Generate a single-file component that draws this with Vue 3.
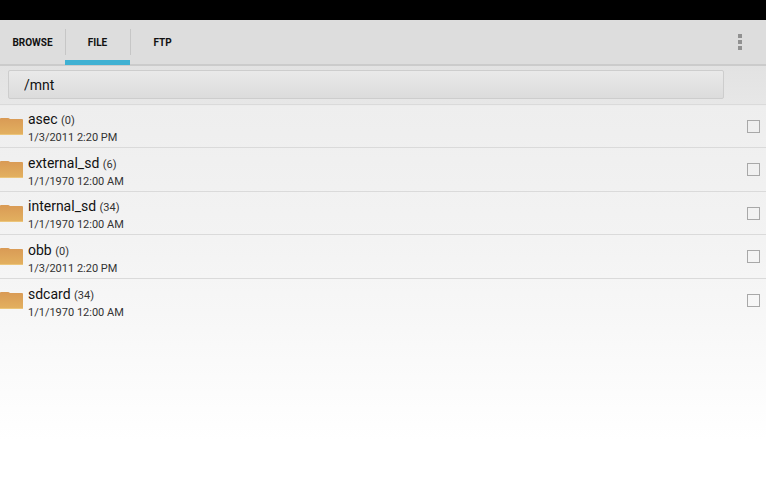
<script setup>
import { ref } from "vue";

const tabs = ["Browse", "File", "FTP"];
const activeTab = ref("File");
const path = ref("/mnt");

const folders = ref([
  { name: "asec", count: 0, date: "1/3/2011 2:20 PM", checked: false },
  { name: "external_sd", count: 6, date: "1/1/1970 12:00 AM", checked: false },
  { name: "internal_sd", count: 34, date: "1/1/1970 12:00 AM", checked: false },
  { name: "obb", count: 0, date: "1/3/2011 2:20 PM", checked: false },
  { name: "sdcard", count: 34, date: "1/1/1970 12:00 AM", checked: false },
]);
</script>

<template>
  <div class="screen">
    <div class="status-bar"></div>

    <header class="action-bar">
      <nav class="tabs">
        <button
          v-for="tab in tabs"
          :key="tab"
          class="tab"
          :class="{ active: tab === activeTab }"
          @click="activeTab = tab"
        >
          {{ tab }}
        </button>
      </nav>
      <button class="overflow" aria-label="More options">
        <span></span>
        <span></span>
        <span></span>
      </button>
    </header>

    <div class="path-bar">
      <input v-model="path" class="path" type="text" aria-label="Path" />
    </div>

    <ul class="files">
      <li v-for="folder in folders" :key="folder.name">
        <label class="file">
          <svg class="folder" viewBox="0 0 23 19" aria-hidden="true">
            <defs>
              <linearGradient id="folder-fill" x1="0" y1="0" x2="0" y2="1">
                <stop offset="0" stop-color="#d99a55" />
                <stop offset="1" stop-color="#e3b160" />
              </linearGradient>
            </defs>
            <path
              d="M0 18V2q0-1 1-1h7q1 0 2 1h12q1 0 1 1v15z"
              fill="url(#folder-fill)"
            />
            <path d="M0 17.5h23" stroke="#ecc57a" stroke-width="1" />
          </svg>
          <span class="info">
            <span class="name">
              {{ folder.name }} <span class="count">({{ folder.count }})</span>
            </span>
            <span class="date">{{ folder.date }}</span>
          </span>
          <input v-model="folder.checked" class="check" type="checkbox" />
        </label>
      </li>
    </ul>
  </div>
</template>

<style>
body {
  background: #fff;
}
</style>

<style scoped>
.screen {
  min-height: 100vh;
  background: linear-gradient(#e2e2e2 64px, #e7e7e7 104px, #eeeeee 106px, #f3f3f3 240px, #f8f8f8 330px, #ffffff 440px);
  color: #111;
  font-family: Roboto, "Liberation Sans", sans-serif;
}
.status-bar {
  height: 20px;
  background: #000;
}
.action-bar {
  display: flex;
  justify-content: space-between;
  height: 44px;
  background: #dddddd;
  border-bottom: 2px solid #cbcbcb;
}
.tabs {
  display: flex;
}
.tab {
  position: relative;
  width: 65px;
  padding: 1px 0 0;
  border: none;
  background: none;
  color: #111;
  font-family: inherit;
  font-size: 10px;
  font-weight: bold;
  text-transform: uppercase;
  cursor: pointer;
}
.tab + .tab::before {
  content: "";
  position: absolute;
  top: 9px;
  bottom: 9px;
  left: 0;
  width: 1px;
  background: #c6c6c6;
}
.tab.active::after {
  content: "";
  position: absolute;
  right: 0;
  bottom: -1px;
  left: 0;
  height: 5px;
  background: #3fb1d3;
}
.overflow {
  display: flex;
  flex-direction: column;
  align-items: center;
  justify-content: center;
  gap: 2px;
  width: 52px;
  padding: 0;
  border: none;
  background: none;
  cursor: pointer;
}
.overflow span {
  width: 4px;
  height: 4px;
  background: #919191;
}
.path-bar {
  display: flex;
  padding: 4px 42px 5px 8px;
  border-bottom: 1px solid #dadada;
}
.path {
  flex: 1;
  min-width: 0;
  height: 29px;
  box-sizing: border-box;
  padding: 0 15px;
  border: 1px solid #cdcdcd;
  border-radius: 2px;
  background: linear-gradient(#e9e9e9, #dcdcdc);
  color: #111;
  font-family: inherit;
  font-size: 14px;
  outline: none;
}
.files {
  display: grid;
  grid-auto-rows: 43px 44px;
  margin: 0;
  padding: 0;
  list-style: none;
}
.files li {
  border-bottom: 1px solid #dadada;
}
.files li:last-child {
  border-bottom: none;
}
.file {
  display: flex;
  align-items: center;
  height: 100%;
  padding-right: 6px;
  cursor: pointer;
}
.folder {
  width: 23px;
  height: 19px;
}
.info {
  flex: 1;
  display: flex;
  flex-direction: column;
  margin-left: 5px;
  padding-top: 3px;
}
.name {
  font-size: 14px;
  line-height: 18px;
}
.count {
  color: #333;
  font-size: 11px;
}
.date {
  color: #333;
  font-size: 11px;
  line-height: 15px;
}
.check {
  appearance: none;
  width: 13px;
  height: 13px;
  margin: 0;
  border: 1px solid #a8a8a8;
  background: transparent;
}
.check:checked {
  background: #3fb1d3;
}
</style>
